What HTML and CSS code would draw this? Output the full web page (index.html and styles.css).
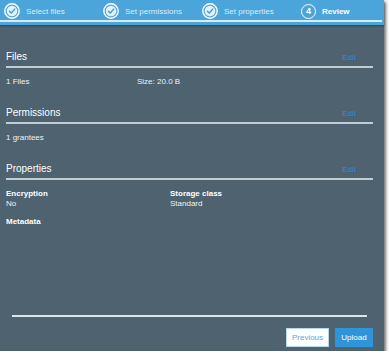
FILE: index.html
```html
<!DOCTYPE html>
<html lang="en">
<head>
  <meta charset="UTF-8">
  <meta name="viewport" content="width=device-width, initial-scale=1.0">
  <title>Upload - Review</title>
  <link rel="stylesheet" href="styles.css">
</head>
<body>
  <div class="panel">
    <div class="steps">
      <ol class="step-list">
        <li class="step done">
          <svg class="badge" width="16" height="16" viewBox="0 0 16 16">
            <circle cx="8" cy="8" r="7.2" fill="none" stroke="#fff" stroke-width="1.4"/>
            <circle cx="8" cy="8" r="5.3" fill="#e3f1fa"/>
            <path d="M5.4 8.2 L7.3 10 L10.7 6.1" fill="none" stroke="#3d9bd6" stroke-width="1.4" stroke-linecap="round" stroke-linejoin="round"/>
          </svg>
          <span class="step-name">Select files</span>
        </li>
        <li class="step done">
          <svg class="badge" width="16" height="16" viewBox="0 0 16 16">
            <circle cx="8" cy="8" r="7.2" fill="none" stroke="#fff" stroke-width="1.4"/>
            <circle cx="8" cy="8" r="5.3" fill="#e3f1fa"/>
            <path d="M5.4 8.2 L7.3 10 L10.7 6.1" fill="none" stroke="#3d9bd6" stroke-width="1.4" stroke-linecap="round" stroke-linejoin="round"/>
          </svg>
          <span class="step-name">Set permissions</span>
        </li>
        <li class="step done">
          <svg class="badge" width="16" height="16" viewBox="0 0 16 16">
            <circle cx="8" cy="8" r="7.2" fill="none" stroke="#fff" stroke-width="1.4"/>
            <circle cx="8" cy="8" r="5.3" fill="#e3f1fa"/>
            <path d="M5.4 8.2 L7.3 10 L10.7 6.1" fill="none" stroke="#3d9bd6" stroke-width="1.4" stroke-linecap="round" stroke-linejoin="round"/>
          </svg>
          <span class="step-name">Set properties</span>
        </li>
        <li class="step current">
          <span class="badge number">4</span>
          <span class="step-name">Review</span>
        </li>
      </ol>
      <div class="step-line"></div>
    </div>

    <div class="content">
      <section class="section">
        <div class="section-head">
          <h2>Files</h2>
          <a class="edit">Edit</a>
        </div>
        <div class="files-row">
          <span>1 Files</span>
          <span>Size: 20.0 B</span>
        </div>
      </section>

      <section class="section">
        <div class="section-head">
          <h2>Permissions</h2>
          <a class="edit">Edit</a>
        </div>
        <div class="line">1 grantees</div>
      </section>

      <section class="section">
        <div class="section-head">
          <h2>Properties</h2>
          <a class="edit">Edit</a>
        </div>
        <div class="props">
          <div>
            <div class="label">Encryption</div>
            <div class="line">No</div>
          </div>
          <div>
            <div class="label">Storage class</div>
            <div class="line">Standard</div>
          </div>
          <div class="meta">
            <div class="label">Metadata</div>
          </div>
        </div>
      </section>
    </div>

    <div class="footer">
      <div class="footer-rule"></div>
      <div class="buttons">
        <button class="btn prev">Previous</button>
        <button class="btn primary">Upload</button>
      </div>
    </div>
  </div>
</body>
</html>
```

FILE: styles.css
```css
html, body {
  margin: 0;
  background: #fff;
  font-family: "Liberation Sans", Arial, Helvetica, sans-serif;
}

.panel {
  width: 384px;
  height: 351px;
  display: flex;
  flex-direction: column;
  background: #4e6270;
  box-shadow: 2px 2px 3px rgba(0, 0, 0, .55);
}

.steps {
  height: 25px;
  background: #4ba4da;
  box-shadow: 0 1px 2px rgba(0, 0, 0, .35);
}

.step-list {
  display: grid;
  grid-template-columns: repeat(4, 99px);
  height: 20px;
  margin: 0;
  padding: 0 0 0 4px;
  list-style: none;
}

.step {
  display: flex;
  align-items: center;
  gap: 6px;
  padding-top: 2px;
}

.badge {
  display: block;
  flex: none;
}

.number {
  width: 13px;
  height: 13px;
  border: 1.5px solid #fff;
  border-radius: 50%;
  color: #fff;
  font-size: 9px;
  font-weight: bold;
  line-height: 13px;
  text-align: center;
}

.step-name {
  font-size: 8px;
  color: #dcedf8;
}

.current .step-name {
  color: #fff;
  font-weight: bold;
}

.step-line {
  height: 2px;
  margin-right: 2px;
  background: #d6ecf9;
}

.content {
  flex: 1;
  padding: 0 11px 0 6px;
}

.section {
  margin-top: 20px;
}

.section:first-child {
  margin-top: 26px;
}

.section-head {
  display: flex;
  justify-content: space-between;
  align-items: center;
  padding-bottom: 3px;
  border-bottom: 2px solid #c3ccd2;
  margin-bottom: 9px;
}

.section-head h2 {
  margin: 0;
  font-size: 10px;
  font-weight: normal;
  line-height: 12px;
  color: #fff;
}

.edit {
  margin-right: 17px;
  font-size: 8px;
  color: #2f8dd0;
  cursor: pointer;
}

.files-row {
  display: grid;
  grid-template-columns: 131px auto;
  font-size: 8px;
  line-height: 10px;
  color: #eef2f4;
}

.line {
  font-size: 8px;
  line-height: 10px;
  color: #eef2f4;
}

.props {
  display: grid;
  grid-template-columns: 164px auto;
  row-gap: 8px;
}

.label {
  font-size: 8px;
  font-weight: bold;
  line-height: 10px;
  color: #fff;
}

.meta {
  grid-column: 1 / 3;
}

.footer {
  padding: 0 11px 4px 12px;
}

.footer-rule {
  height: 2px;
  margin-right: 6px;
  background: #dde3e7;
}

.buttons {
  display: flex;
  justify-content: flex-end;
  gap: 6px;
  margin-top: 11px;
}

.btn {
  height: 19px;
  padding: 0 4px;
  border: 1px solid #b9d7ee;
  font-family: inherit;
  font-size: 8px;
}

.prev {
  width: 43px;
  background: #fff;
  color: #5ea6dc;
}

.primary {
  width: 38px;
  background: #2f95d8;
  border-color: #2f95d8;
  color: #fff;
}
```
